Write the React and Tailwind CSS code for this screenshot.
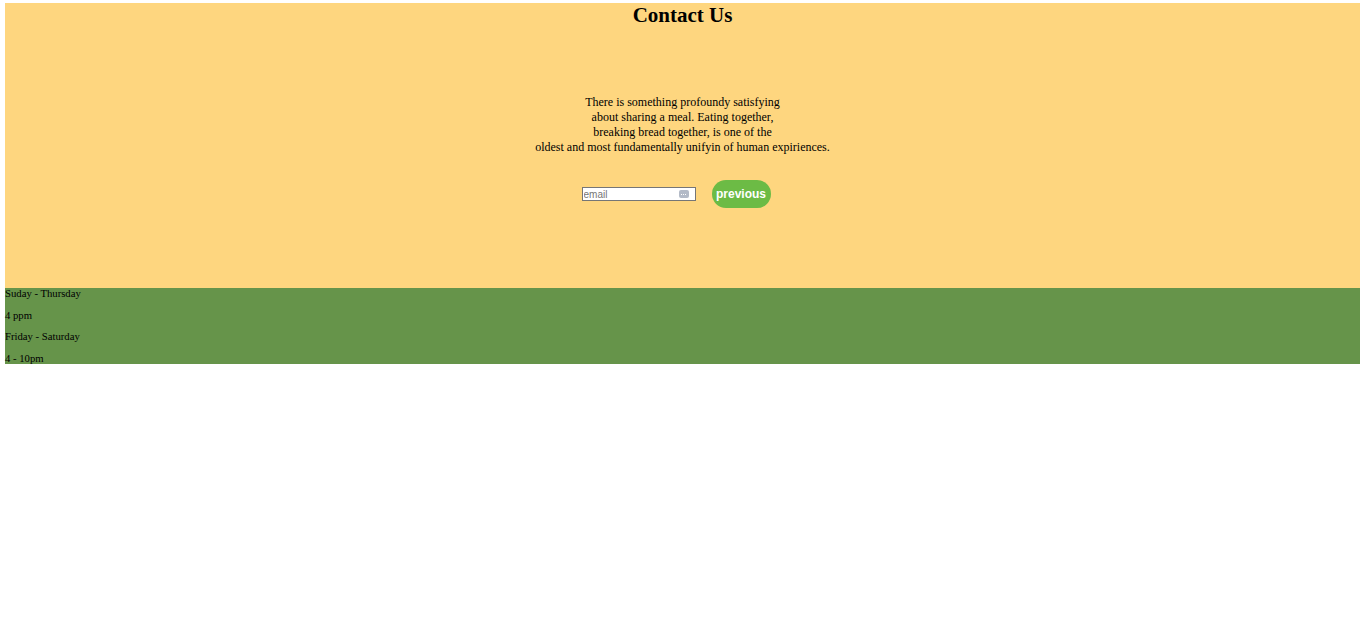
export default function App() {
  return (
    <div className="ml-[5px] mt-[3px] font-['Liberation_Serif',serif] text-black">
      <section className="h-[285px] bg-[#fed67f] flex flex-col items-center">
        <h2 className="text-[21px] leading-[24px] font-bold">Contact Us</h2>
        <p className="mt-[68px] text-[12px] leading-[15px] text-center">
          There is something profoundy satisfying
          <br />
          about sharing a meal. Eating together,
          <br />
          breaking bread together, is one of the
          <br />
          oldest and most fundamentally unifyin of human expiriences.
        </p>
        <div className="mt-[25px] flex items-center gap-[16px]">
          <div className="relative">
            <input
              type="email"
              placeholder="email"
              className="block w-[114px] h-[14px] border border-[#767676] bg-white px-[1px] text-[10px] leading-[12px] font-['Liberation_Sans',sans-serif] placeholder:text-[#757575] outline-none"
            />
            <span className="absolute right-[7px] top-[3px] w-[10px] h-[8px] rounded-[2px] bg-[#b3bac7] flex items-center justify-center gap-[1px]">
              <span className="w-[1px] h-[1px] bg-white" />
              <span className="w-[1px] h-[1px] bg-white" />
              <span className="w-[1px] h-[1px] bg-white" />
            </span>
          </div>
          <button className="mr-[13px] w-[59px] h-[28px] rounded-full bg-[#6cbb45] text-white text-[12px] font-bold font-['Liberation_Sans',sans-serif]">
            previous
          </button>
        </div>
      </section>
      <section className="h-[76px] bg-[#66944a] flex flex-col gap-[10.5px] text-[10.7px] leading-[11px]">
        <p>Suday - Thursday</p>
        <p>4 ppm</p>
        <p>Friday - Saturday</p>
        <p>4 - 10pm</p>
      </section>
    </div>
  );
}
